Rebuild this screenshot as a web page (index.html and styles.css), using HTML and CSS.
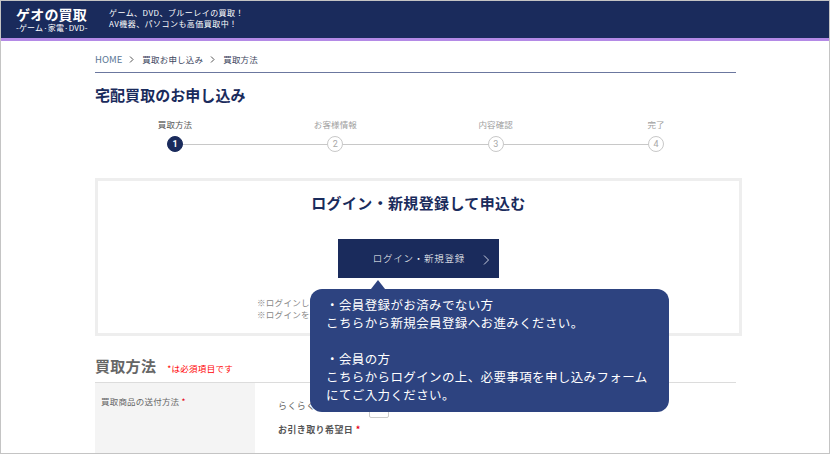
FILE: index.html
```html
<!DOCTYPE html>
<html lang="ja">
<head>
<meta charset="utf-8">
<title>宅配買取のお申し込み</title>
<link rel="stylesheet" href="styles.css">
</head>
<body>
<div class="frame">
  <header class="header">
    <div class="logo">
      <div class="logo-main">ゲオの買取</div>
      <div class="logo-sub">-ゲーム·家電·DVD-</div>
    </div>
    <div class="tagline">ゲーム、DVD、ブルーレイの買取！<br>AV機器、パソコンも高価買取中！</div>
  </header>
  <main class="main">
    <nav class="crumbs">
      <span class="home">HOME</span>
      <svg class="sep" width="5" height="7" viewBox="0 0 5 7"><path d="M1 .5 4 3.5 1 6.5" fill="none" stroke="#555" stroke-width="1"/></svg>
      <span>買取お申し込み</span>
      <svg class="sep" width="5" height="7" viewBox="0 0 5 7"><path d="M1 .5 4 3.5 1 6.5" fill="none" stroke="#555" stroke-width="1"/></svg>
      <span>買取方法</span>
    </nav>
    <h1 class="title">宅配買取のお申し込み</h1>
    <ol class="steps">
      <li class="step active"><span class="step-label">買取方法</span><span class="num">1</span></li>
      <li class="step"><span class="step-label">お客様情報</span><span class="num">2</span></li>
      <li class="step"><span class="step-label">内容確認</span><span class="num">3</span></li>
      <li class="step"><span class="step-label">完了</span><span class="num">4</span></li>
    </ol>
    <section class="login-box">
      <h2 class="login-title">ログイン・新規登録して申込む</h2>
      <a class="login-btn"><span>ログイン・新規登録</span>
        <svg class="chev" width="7" height="10" viewBox="0 0 7 10"><path d="M1 .5 5.5 5 1 9.5" fill="none" stroke="#c8cede" stroke-width="1"/></svg>
      </a>
      <p class="note">※ログインしていただくと、お客様情報の入力が省略できます。<br>※ログインをせずにお申し込みはできません。</p>
    </section>
    <div class="section-head">
      <h2 class="section-title">買取方法</h2><span class="required">*は必須項目です</span>
    </div>
    <div class="row">
      <div class="row-label">買取商品の送付方法<span class="star"> *</span></div>
      <div class="row-body">
        <div class="option">らくらく宅配買取<span class="select"></span></div>
        <div class="date-label">お引き取り希望日<span class="star"> *</span></div>
      </div>
    </div>
  </main>
  <div class="tip">・会員登録がお済みでない方<br>こちらから新規会員登録へお進みください。<br><br>・会員の方<br>こちらからログインの上、必要事項を申し込みフォーム<br>にてご入力ください。</div>
</div>
</body>
</html>
```
FILE: styles.css
```css
* { box-sizing: border-box; }
html, body { margin: 0; padding: 0; background: #fff; }
body { font-family: "Noto Sans CJK JP", "Noto Sans", sans-serif; }
.frame {
  position: relative;
  width: 830px;
  height: 454px;
  overflow: hidden;
  border: 1px solid #c4c4c4;
}
.header {
  display: flex;
  align-items: center;
  height: 40px;
  background: #1a2b5c;
  border-bottom: 3px solid #b48ae6;
  color: #fff;
  padding-left: 15px;
}
.logo { width: 93px; text-align: left; }
.logo-main { font-size: 14px; font-weight: 700; line-height: 17px; letter-spacing: .2px; margin-top: -1px; }
.logo-sub { font-size: 8px; line-height: 10px; letter-spacing: .15px; }
.tagline { font-size: 8px; line-height: 11px; letter-spacing: .45px; margin-top: -3px; }
.main { width: 641px; margin-left: 94px; }
.crumbs {
  display: flex;
  align-items: center;
  height: 32px;
  border-bottom: 1px solid #6b779f;
  font-size: 8.5px;
  letter-spacing: .2px;
  color: #3c4660;
  padding-top: 5px;
}
.home { color: #5b7896; font-size: 9.5px; letter-spacing: 0; }
.crumbs .sep { margin: 0 8px 0 7px; }
.title { margin: 12px 0 0; font-size: 15px; line-height: 20px; font-weight: 700; color: #1a2b5c; letter-spacing: .05px; }
.steps {
  display: flex;
  justify-content: space-between;
  list-style: none;
  margin: 13px 0 0;
  padding: 0 72px;
  width: 641px;
  position: relative;
}
.steps::before {
  content: "";
  position: absolute;
  left: 80px;
  width: 480px;
  bottom: 7px;
  height: 1px;
  background: #c8c8c8;
}
.step { position: relative; width: 16px; display: flex; flex-direction: column; align-items: center; }
.step-label { font-size: 8.5px; line-height: 12px; color: #a0a0a0; white-space: nowrap; letter-spacing: .1px; }
.active .step-label { color: #555; }
.num {
  display: flex;
  align-items: center;
  justify-content: center;
  width: 16px;
  height: 16px;
  margin-top: 6px;
  border-radius: 50%;
  border: 1px solid #c8c8c8;
  background: #fff;
  color: #a8a8a8;
  font-family: "Roboto", sans-serif;
  font-size: 9px;
}
.active .num { background: #1a2b5c; border-color: #1a2b5c; color: #fff; font-weight: 700; }
.login-box {
  width: 647px;
  height: 158px;
  margin-top: 26px;
  border: 3px solid #eeeeee;
  text-align: center;
}
.login-title { margin: 12px 0 0; font-size: 15px; line-height: 20px; font-weight: 700; color: #1a2b5c; letter-spacing: .35px; }
.login-btn {
  position: relative;
  display: flex;
  align-items: center;
  justify-content: center;
  width: 161px;
  height: 39px;
  margin: 26px auto 0;
  padding: 0 0 2px 1px;
  background: #1a2b5c;
  color: #fff;
  font-size: 9.5px;
  font-weight: 300;
  letter-spacing: .75px;
}
.chev { position: absolute; left: 145px; top: 16px; }
.note { margin: 18px 0 0 159px; text-align: left; font-size: 8.5px; line-height: 12px; color: #888; white-space: nowrap; overflow: hidden; letter-spacing: .3px; }
.section-head {
  display: flex;
  align-items: center;
  height: 47px;
  border-bottom: 1px solid #dcdcdc;
  padding-top: 13px;
}
.section-title { margin: 0; font-size: 15px; font-weight: 700; color: #666; letter-spacing: .3px; }
.required { margin-left: 11px; margin-top: 4px; font-size: 8.5px; color: #f00; letter-spacing: .3px; }
.row { display: flex; height: 80px; }
.row-label {
  width: 160px;
  background: #f4f4f4;
  padding: 12px 0 0 6px;
  font-size: 8.5px;
  line-height: 12px;
  color: #666;
  letter-spacing: .2px;
}
.star { color: #e60012; }
.row-body { padding: 15px 0 0 23px; font-size: 9px; color: #666; }
.option { display: flex; align-items: center; height: 15px; position: relative; letter-spacing: .4px; }
.select { position: absolute; left: 91px; top: 4px; width: 20px; height: 16px; border: 1px solid #ccc; border-radius: 2px; }
.date-label { margin-top: 10px; font-weight: 700; color: #555; letter-spacing: .4px; }
.tip {
  position: absolute;
  left: 309px;
  top: 288px;
  width: 359px;
  height: 123px;
  padding: 7px 0 0 16px;
  background: #2d4380;
  border-radius: 12px;
  color: #fff;
  font-size: 12.5px;
  line-height: 18px;
  letter-spacing: .38px;
}
.tip::before {
  content: "";
  position: absolute;
  left: 61px;
  top: -9px;
  border-left: 7px solid transparent;
  border-right: 7px solid transparent;
  border-bottom: 9px solid #2d4380;
}
```
